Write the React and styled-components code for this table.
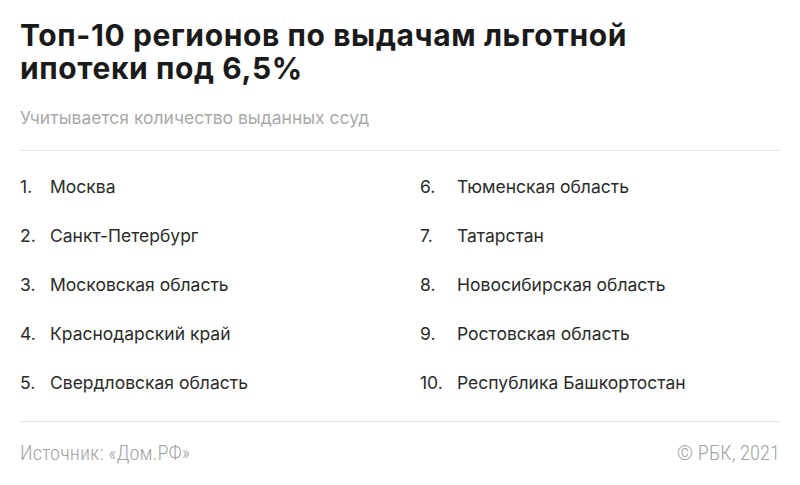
import React from "react";
import styled, { createGlobalStyle } from "styled-components";

const Global = createGlobalStyle`
  html, body { margin: 0; padding: 0; background: #fff; }
  body { font-family: Inter, "Noto Sans", sans-serif; }
`;

const Page = styled.div`
  width: 800px;
  height: 485px;
  box-sizing: border-box;
  padding: 19px 20px 0 20px;
  display: flex;
  flex-direction: column;
  background: #fff;
`;

const Title = styled.h1`
  margin: 0;
  font-family: Inter, sans-serif;
  font-weight: 700;
  font-size: 30px;
  line-height: 33px;
  letter-spacing: 0.6px;
  color: #1a1a1a;
`;

const Subtitle = styled.div`
  margin-top: 23px;
  font-family: Inter, sans-serif;
  font-size: 17.5px;
  line-height: 20px;
  color: #a9a9a9;
`;

const Divider = styled.hr`
  margin: ${(p) => p.$mt || 0}px 0 0 0;
  border: 0;
  border-top: 1px solid #e2e2e2;
  height: 0;
`;

const Grid = styled.div`
  display: grid;
  grid-template-columns: 400px 360px;
  grid-auto-flow: column;
  grid-template-rows: repeat(5, 49px);
  margin-top: 11px;
`;

const Row = styled.div`
  display: flex;
  align-items: center;
  font-family: Inter, sans-serif;
  font-size: 17.5px;
  color: #2b2b2b;
`;

const Num = styled.span`
  width: ${(p) => p.$w}px;
  flex: none;
`;

const Footer = styled.div`
  display: flex;
  justify-content: space-between;
  align-items: center;
  margin-top: 19px;
  line-height: 24px;
  font-family: "Roboto Condensed", "Liberation Sans Narrow", "Arial Narrow", Roboto, sans-serif;
  font-stretch: condensed;
  font-weight: 300;
  font-size: 20.5px;
  color: #a3a3a3;
`;

const items = [
  "Москва",
  "Санкт-Петербург",
  "Московская область",
  "Краснодарский край",
  "Свердловская область",
  "Тюменская область",
  "Татарстан",
  "Новосибирская область",
  "Ростовская область",
  "Республика Башкортостан",
];

export default function App() {
  return (
    <>
      <Global />
      <Page>
        <Title>
          Топ-10 регионов по выдачам льготной
          <br />
          ипотеки под 6,5%
        </Title>
        <Subtitle>Учитывается количество выданных ссуд</Subtitle>
        <Divider $mt={22} />
        <Grid>
          {items.map((t, i) => (
            <Row key={t}>
              <Num $w={i < 5 ? 30 : 37}>{i + 1}.</Num>
              {t}
            </Row>
          ))}
        </Grid>
        <Divider $mt={14} />
        <Footer>
          <span>Источник: «Дом.РФ»</span>
          <span>© РБК, 2021</span>
        </Footer>
      </Page>
    </>
  );
}
